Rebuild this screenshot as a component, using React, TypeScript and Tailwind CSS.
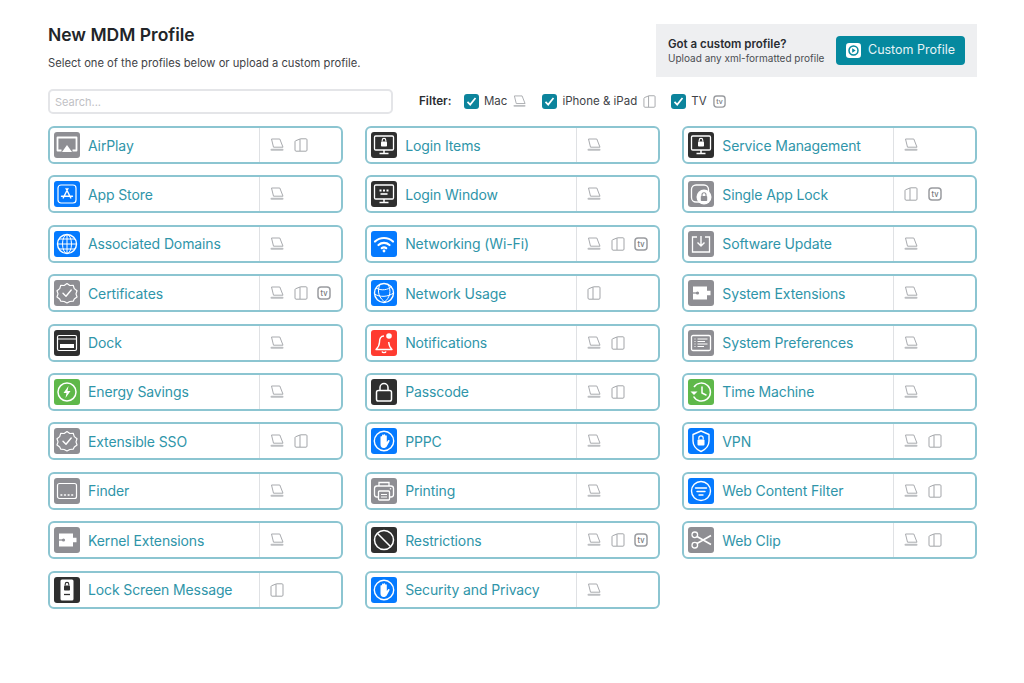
import type { ReactNode } from "react";

type IconName =
  | "airplay" | "appstore" | "globe" | "badge" | "dock" | "energy" | "finder" | "puzzle" | "lockscreen"
  | "monitorLock" | "monitorKeys" | "wifi" | "globeTilt" | "bell" | "padlock" | "hand" | "printer" | "ban"
  | "appLock" | "download" | "prefs" | "clock" | "shield" | "filter" | "scissors";

type Device = "mac" | "ios" | "tv";

type Profile = { name: string; icon: IconName; bg: string; devices: Device[] };

const GRAY = "bg-[#8e8e93]";
const BLUE = "bg-[#057aff]";
const DARK = "bg-[#2f2f2f]";
const GREEN = "bg-[#5fb84a]";
const RED = "bg-[#ff3b30]";

const columns: Profile[][] = [
  [
    { name: "AirPlay", icon: "airplay", bg: GRAY, devices: ["mac", "ios"] },
    { name: "App Store", icon: "appstore", bg: BLUE, devices: ["mac"] },
    { name: "Associated Domains", icon: "globe", bg: BLUE, devices: ["mac"] },
    { name: "Certificates", icon: "badge", bg: GRAY, devices: ["mac", "ios", "tv"] },
    { name: "Dock", icon: "dock", bg: DARK, devices: ["mac"] },
    { name: "Energy Savings", icon: "energy", bg: GREEN, devices: ["mac"] },
    { name: "Extensible SSO", icon: "badge", bg: GRAY, devices: ["mac", "ios"] },
    { name: "Finder", icon: "finder", bg: GRAY, devices: ["mac"] },
    { name: "Kernel Extensions", icon: "puzzle", bg: GRAY, devices: ["mac"] },
    { name: "Lock Screen Message", icon: "lockscreen", bg: DARK, devices: ["ios"] },
  ],
  [
    { name: "Login Items", icon: "monitorLock", bg: DARK, devices: ["mac"] },
    { name: "Login Window", icon: "monitorKeys", bg: DARK, devices: ["mac"] },
    { name: "Networking (Wi-Fi)", icon: "wifi", bg: BLUE, devices: ["mac", "ios", "tv"] },
    { name: "Network Usage", icon: "globeTilt", bg: BLUE, devices: ["ios"] },
    { name: "Notifications", icon: "bell", bg: RED, devices: ["mac", "ios"] },
    { name: "Passcode", icon: "padlock", bg: DARK, devices: ["mac", "ios"] },
    { name: "PPPC", icon: "hand", bg: BLUE, devices: ["mac"] },
    { name: "Printing", icon: "printer", bg: GRAY, devices: ["mac"] },
    { name: "Restrictions", icon: "ban", bg: DARK, devices: ["mac", "ios", "tv"] },
    { name: "Security and Privacy", icon: "hand", bg: BLUE, devices: ["mac"] },
  ],
  [
    { name: "Service Management", icon: "monitorLock", bg: DARK, devices: ["mac"] },
    { name: "Single App Lock", icon: "appLock", bg: GRAY, devices: ["ios", "tv"] },
    { name: "Software Update", icon: "download", bg: GRAY, devices: ["mac"] },
    { name: "System Extensions", icon: "puzzle", bg: GRAY, devices: ["mac"] },
    { name: "System Preferences", icon: "prefs", bg: GRAY, devices: ["mac"] },
    { name: "Time Machine", icon: "clock", bg: GREEN, devices: ["mac"] },
    { name: "VPN", icon: "shield", bg: BLUE, devices: ["mac", "ios"] },
    { name: "Web Content Filter", icon: "filter", bg: BLUE, devices: ["mac", "ios"] },
    { name: "Web Clip", icon: "scissors", bg: GRAY, devices: ["mac", "ios"] },
  ],
];

function DeviceIcon({ type, size = 14 }: { type: Device; size?: number }) {
  if (type === "mac") {
    return (
      <svg width={size} height={size} viewBox="0 0 14 14" fill="none" stroke="#a9abaf" strokeWidth="1">
        <path d="M1.5 1H9.8L13 9.2H3.5Z" strokeLinejoin="round" />
        <path d="M1.5 11.7H12.5" strokeWidth="2" strokeLinecap="round" stroke="#bcbec1" />
      </svg>
    );
  }
  if (type === "ios") {
    return (
      <svg width={size} height={size} viewBox="0 0 14 14" fill="none" stroke="#a3a5a9" strokeWidth="1">
        <path d="M1 4V12C1 12.8 1.5 13.2 2 13.2H12C12.6 13.2 13 12.8 13 12V1.8C13 1.2 12.6 .8 12 .8H6.5L1.5 2.8C1.2 3 1 3.4 1 4Z" strokeLinejoin="round" />
        <path d="M6 13V1" />
      </svg>
    );
  }
  return (
    <svg width={size} height={size} viewBox="0 0 14 14" fill="none">
      <rect x="1" y="1" width="12" height="12" rx="3" stroke="#9a9ca0" strokeWidth="1.5" />
      <text x="7" y="9.6" textAnchor="middle" fontSize="7.5" fontFamily="Inter, sans-serif" fontWeight="500" fill="#77797d">
        tv
      </text>
    </svg>
  );
}

const glyphs: Record<IconName, ReactNode> = {
  airplay: (
    <>
      <path d="M7.5 18.5H3.5V5.5H22.5V18.5H18.5" strokeWidth="1.8" strokeLinejoin="round" />
      <path d="M13 13L18 20H8Z" fill="#fff" stroke="none" />
    </>
  ),
  appstore: (
    <>
      <rect x="4" y="4" width="18" height="18" rx="3" strokeWidth="1.2" />
      <path d="M12 7.5L16.8 17M14 7.5L9.2 17M7.5 15.3H18.5" strokeWidth="1.4" strokeLinecap="round" />
    </>
  ),
  globe: (
    <>
      <circle cx="13" cy="13" r="9.5" strokeWidth="1.4" />
      <ellipse cx="13" cy="13" rx="4.5" ry="9.5" strokeWidth="1" />
      <path d="M13 3.5V22.5M3.5 13H22.5M5 8H21M5 18H21" strokeWidth="1" />
    </>
  ),
  badge: (
    <>
      <path
        d="M13 3.5L15.8 5.5L19.2 5.3L20.3 8.6L23 10.7L22 13.9L23 17L20.3 19L19.2 21.2L15.8 21.5L13 23L10.2 21.5L6.8 21.2L5.7 19L3 17L4 13.9L3 10.7L5.7 8.6L6.8 5.3L10.2 5.5Z"
        strokeWidth="1.2"
        strokeLinejoin="round"
      />
      <path d="M9 13.2L12 16.2L17.2 10" strokeWidth="1.4" strokeLinecap="round" strokeLinejoin="round" />
    </>
  ),
  dock: (
    <>
      <rect x="3.5" y="5.5" width="19" height="15" rx="1.5" strokeWidth="1.2" />
      <path d="M3.5 9H22.5" strokeWidth="1" />
      <rect x="6" y="14" width="14" height="4" fill="#fff" stroke="none" />
    </>
  ),
  energy: (
    <>
      <circle cx="13" cy="13" r="9" strokeWidth="1.5" />
      <path d="M14.5 7L9.5 14H12.5L11.5 19L16.5 12H13.5Z" fill="#fff" stroke="none" />
    </>
  ),
  finder: (
    <>
      <rect x="3.5" y="5.5" width="19" height="15" rx="2" strokeWidth="1.2" />
      <path d="M7 17H7.8M10.6 17H11.4M14.2 17H15M17.8 17H18.6" strokeWidth="1.6" strokeLinecap="round" />
    </>
  ),
  puzzle: (
    <>
      <path d="M5 6.5H19V10.8H22.5V15.2H19V19.5H5Z" fill="#fff" stroke="none" />
      <path d="M4 13H9" stroke="#8e8e93" strokeWidth="1.3" />
      <circle cx="9.5" cy="13" r="1.6" fill="#8e8e93" stroke="none" />
    </>
  ),
  lockscreen: (
    <>
      <rect x="6.5" y="2.5" width="13" height="21" rx="1.5" fill="#fff" stroke="none" />
      <rect x="10" y="8.5" width="6" height="5" rx="0.8" fill="#2f2f2f" stroke="none" />
      <path d="M11.2 8.5V7.2A1.8 1.8 0 0 1 14.8 7.2V8.5" stroke="#2f2f2f" strokeWidth="1.1" />
      <path d="M10 17.5H16" stroke="#2f2f2f" strokeWidth="1.3" />
    </>
  ),
  monitorLock: (
    <>
      <rect x="3.5" y="4" width="19" height="14" rx="1.2" strokeWidth="1.3" />
      <path d="M13 18V21M8.5 21.5H17.5" strokeWidth="1.5" />
      <rect x="10" y="9.5" width="6" height="5" rx="0.8" fill="#fff" stroke="none" />
      <path d="M11.2 9.5V8.2A1.8 1.8 0 0 1 14.8 8.2V9.5" strokeWidth="1.1" />
    </>
  ),
  monitorKeys: (
    <>
      <rect x="3.5" y="4" width="19" height="14" rx="1.2" strokeWidth="1.3" />
      <path d="M13 18V21M8.5 21.5H17.5" strokeWidth="1.5" />
      <path d="M8.5 9.5H10.5M12 9.5H14M15.5 9.5H17.5" strokeWidth="1.8" />
      <path d="M9.5 13H16.5" strokeWidth="1.6" />
    </>
  ),
  wifi: (
    <>
      <path d="M4 10.5C9 5.8 17 5.8 22 10.5" strokeWidth="2.2" strokeLinecap="round" />
      <path d="M7.5 14C10.7 11.2 15.3 11.2 18.5 14" strokeWidth="2.2" strokeLinecap="round" />
      <path d="M10.8 17.2C12 16.2 14 16.2 15.2 17.2" strokeWidth="2.2" strokeLinecap="round" />
      <circle cx="13" cy="20" r="1.4" fill="#fff" stroke="none" />
    </>
  ),
  globeTilt: (
    <>
      <circle cx="13" cy="13" r="9.5" strokeWidth="1.4" />
      <path d="M9 4.5C5.5 11 8 19 15 22.5M16.5 4C21 10 19 18 13 22.5" strokeWidth="1" />
      <path d="M5 8C10 11 17 10 21 6.5M3.5 14C9 17.5 17 17 22.5 13" strokeWidth="1" />
    </>
  ),
  bell: (
    <>
      <path d="M13 6C9.5 6 8.5 9 8.5 12C8.5 15 7.5 17 5 19.5H21C18.5 17 17.8 15 17.7 12" strokeWidth="1.4" strokeLinejoin="round" />
      <path d="M11 21.5C11.5 23 14.5 23 15 21.5" strokeWidth="1.4" />
      <circle cx="18" cy="6" r="2.8" fill="#fff" stroke="none" />
    </>
  ),
  padlock: (
    <>
      <rect x="5.5" y="11.5" width="15" height="10.5" rx="1.8" strokeWidth="1.5" />
      <path d="M9 11.5V8.5A4 4 0 0 1 17 8.5V11.5" strokeWidth="1.5" />
    </>
  ),
  hand: (
    <>
      <circle cx="13" cy="13" r="9.7" strokeWidth="1.4" />
      <path
        d="M9.5 13V9C9.5 7.8 11 7.8 11 9V7.5C11 6.3 12.6 6.3 12.6 7.5V7C12.6 5.9 14.2 5.9 14.2 7V8C14.2 6.9 15.8 6.9 15.8 8V14L17 12.5C17.8 11.6 19 12.4 18.4 13.4L16 18C15.2 19.4 14 20 12.5 20C10.5 20 9.5 18.5 9.5 16.5Z"
        fill="#fff"
        stroke="none"
      />
    </>
  ),
  printer: (
    <>
      <path d="M8 8V4.5H18V8" strokeWidth="1.3" />
      <rect x="3.5" y="8" width="19" height="11" rx="2.5" strokeWidth="1.3" />
      <rect x="7.5" y="13" width="11" height="9" rx="1" strokeWidth="1.3" fill="#8e8e93" />
      <path d="M10 16.5H16M10 19H16" strokeWidth="1" />
      <circle cx="19.5" cy="10.8" r="0.8" fill="#fff" stroke="none" />
    </>
  ),
  ban: (
    <>
      <circle cx="13" cy="13" r="9.5" strokeWidth="1.5" />
      <path d="M6.3 6.3L19.7 19.7" strokeWidth="1.5" />
    </>
  ),
  appLock: (
    <>
      <rect x="3.5" y="4" width="17" height="17" rx="4.5" strokeWidth="1.3" />
      <circle cx="16" cy="16" r="7.5" fill="#fff" stroke="none" />
      <rect x="12.8" y="15" width="6.4" height="5" rx="0.8" fill="#8e8e93" stroke="none" />
      <path d="M14 15V13.7A2 2 0 0 1 18 13.7V15" stroke="#8e8e93" strokeWidth="1.1" />
    </>
  ),
  download: (
    <>
      <path d="M9 6H4.5V21H21.5V6H17" strokeWidth="1.3" />
      <path d="M13 5V15M9.5 11.5L13 15L16.5 11.5" strokeWidth="1.4" strokeLinejoin="round" />
    </>
  ),
  prefs: (
    <>
      <rect x="3.5" y="5.5" width="19" height="15" rx="1.5" strokeWidth="1.3" />
      <path d="M6.5 9H7.5M6.5 11.5H7.5M6.5 14H7.5M6.5 16.5H7.5" strokeWidth="1" />
      <path d="M9.5 9H19.5M9.5 11.5H17M9.5 14H19.5M9.5 16.5H16" strokeWidth="1" />
    </>
  ),
  clock: (
    <>
      <path d="M5.6 17.5A9 9 0 1 0 6 8" strokeWidth="1.5" />
      <path d="M2.5 12.5L6 16L9.5 12.5" fill="#fff" stroke="none" />
      <path d="M14 8V14L18 16" strokeWidth="1.5" strokeLinecap="round" strokeLinejoin="round" />
    </>
  ),
  shield: (
    <>
      <path d="M13 3L21 6.5V13C21 18 17.5 21.5 13 23.5C8.5 21.5 5 18 5 13V6.5Z" strokeWidth="1.4" strokeLinejoin="round" />
      <rect x="9.5" y="11.5" width="7" height="6" rx="1" fill="#fff" stroke="none" />
      <path d="M10.8 11.5V10A2.2 2.2 0 0 1 15.2 10V11.5" strokeWidth="1.2" />
    </>
  ),
  filter: (
    <>
      <circle cx="13" cy="13" r="9.5" strokeWidth="1.4" />
      <path d="M7.5 10H18.5M9 13.5H17M11 17H15" strokeWidth="1.4" strokeLinecap="round" />
    </>
  ),
  scissors: (
    <>
      <circle cx="6.8" cy="7.8" r="2.8" strokeWidth="1.3" />
      <circle cx="6.8" cy="18.2" r="2.8" strokeWidth="1.3" />
      <path d="M9 9.5L23 17.5M9 16.5L23 8.5" strokeWidth="1.6" />
    </>
  ),
};

function ProfileIcon({ name, bg }: { name: IconName; bg: string }) {
  return (
    <span className={`flex h-[26px] w-[26px] shrink-0 items-center justify-center rounded-[3px] ${bg}`}>
      <svg width="26" height="26" viewBox="0 0 26 26" fill="none" stroke="#fff">
        {glyphs[name]}
      </svg>
    </span>
  );
}

function ProfileCard({ profile }: { profile: Profile }) {
  return (
    <button
      type="button"
      className="flex h-[38px] w-full items-stretch rounded-[6px] border-2 border-[#8cc5d1] bg-white text-left"
    >
      <span className="flex w-[209px] shrink-0 items-center gap-[8.5px] pl-[3.5px]">
        <ProfileIcon name={profile.icon} bg={profile.bg} />
        <span className="text-[14px] tracking-[-0.12px] text-[#2f95a9]">{profile.name}</span>
      </span>
      <span className="flex flex-1 items-center gap-[9.5px] border-l border-[#dfe1e4] pl-[10px]">
        {profile.devices.map((device) => (
          <DeviceIcon key={device} type={device} />
        ))}
      </span>
    </button>
  );
}

function FilterCheck({ label, icon, className }: { label: string; icon: Device; className: string }) {
  return (
    <label className={`flex items-center ${className}`}>
      <span className="flex h-[15px] w-[15px] items-center justify-center rounded-[3px] bg-[#0c849c]">
        <svg width="11" height="11" viewBox="0 0 11 11" fill="none">
          <path d="M1.5 5.8L4.2 8.6L9.5 2" stroke="#fff" strokeWidth="1.7" />
        </svg>
      </span>
      <span className="ml-[5px] text-[11.5px] text-[#3f4347]">{label}</span>
      <span className="ml-[6px]">
        <DeviceIcon type={icon} size={13} />
      </span>
    </label>
  );
}

export default function App() {
  return (
    <main className="h-[683px] w-[1024px] overflow-hidden bg-white pl-[48px] pr-[47px] pt-[24px] font-['Inter',sans-serif]">
      <header className="flex items-start justify-between">
        <div>
          <h1 className="mt-px text-[17.5px] font-semibold leading-[20px] text-[#222529]">New MDM Profile</h1>
          <p className="mt-[11px] text-[11.2px] leading-[14px] text-[#3f4347]">
            Select one of the profiles below or upload a custom profile.
          </p>
        </div>
        <div className="flex h-[53px] w-[321px] items-center bg-[#eeeff1] pl-[12px]">
          <div className="w-[168px]">
            <p className="text-[11.5px] font-semibold leading-[15px] text-[#2a2d31]">Got a custom profile?</p>
            <p className="text-[10px] leading-[13px] text-[#4a4d52]">Upload any xml-formatted profile</p>
          </div>
          <button
            type="button"
            className="flex h-[29px] w-[129px] items-center justify-center gap-[7px] rounded-[4px] bg-[#05899f] text-[12.5px] text-[#e6f3f6]"
          >
            <svg width="15" height="15" viewBox="0 0 14 14" fill="none">
              <rect width="14" height="14" rx="3" fill="#fff" />
              <circle cx="7" cy="7" r="4.2" stroke="#05899f" strokeWidth="1.4" />
              <path d="M5.8 5L9 7L5.8 9Z" fill="#05899f" />
            </svg>
            Custom Profile
          </button>
        </div>
      </header>

      <div className="mt-[12px] flex h-[25px] items-center">
        <input
          placeholder="Search..."
          readOnly
          className="h-[25px] w-[345px] rounded-[5px] border-2 border-[#e4e5e8] px-[5px] text-[11px] outline-none placeholder:text-[#bfc1c5]"
        />
        <span className="ml-[26px] text-[11.7px] font-semibold text-[#2a2d31]">Filter:</span>
        <FilterCheck label="Mac" icon="mac" className="ml-[12.5px]" />
        <FilterCheck label="iPhone & iPad" icon="ios" className="ml-[16px]" />
        <FilterCheck label="TV" icon="tv" className="ml-[15px]" />
      </div>

      <div className="mt-[12px] grid grid-cols-3 gap-x-[22.5px]">
        {columns.map((column, i) => (
          <div key={i} className="flex flex-col gap-[11.4px]">
            {column.map((profile) => (
              <ProfileCard key={profile.name} profile={profile} />
            ))}
          </div>
        ))}
      </div>
    </main>
  );
}
